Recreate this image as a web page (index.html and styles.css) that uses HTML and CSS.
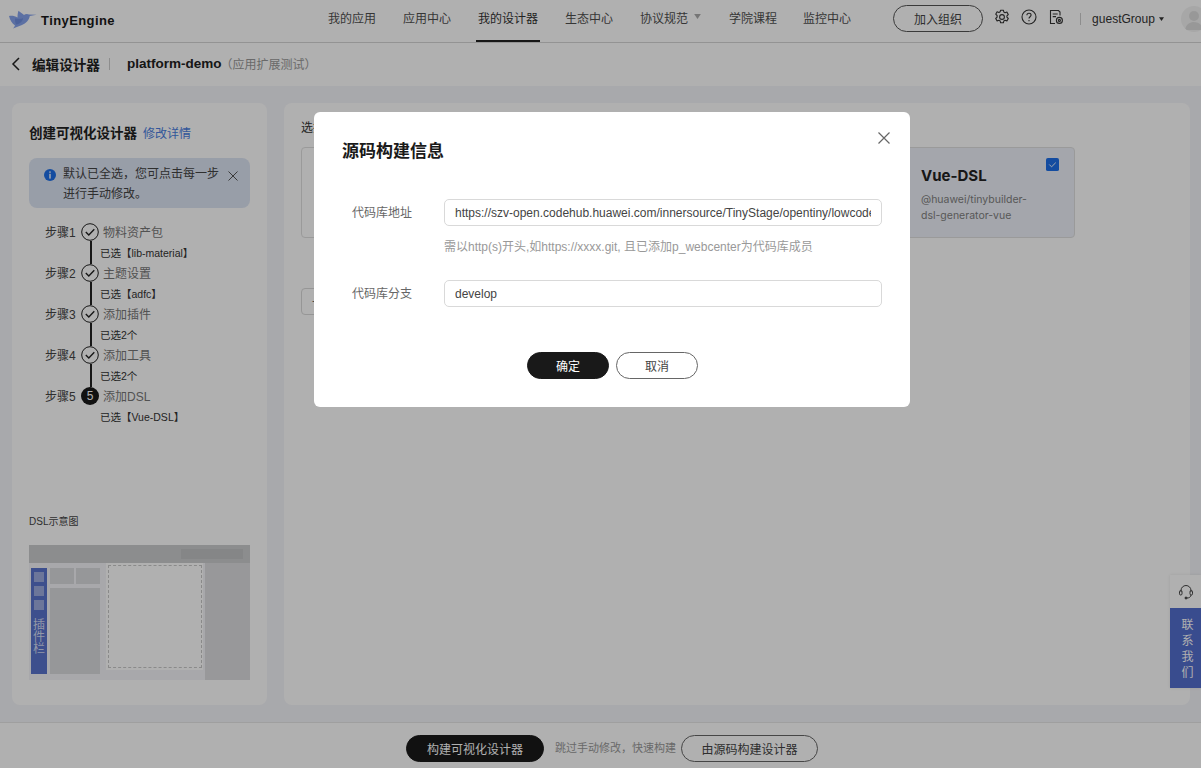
FILE: index.html
```html
<!DOCTYPE html>
<html lang="zh-CN">
<head>
<meta charset="utf-8">
<title>TinyEngine</title>
<link rel="stylesheet" href="styles.css">
</head>
<body>
<div class="page">
  <header class="topbar">
    <div class="brand">
      <svg class="brand-logo" viewBox="0 0 29 20" width="29" height="20"><path fill="#86a3ec" d="M1 6 C4 5.500 7 6 9.500 7.500 C9.500 5 9.800 2.500 10.500 .8 C12 2 14 3.500 16 5 C17.200 3.800 19.500 3.500 21 4.500 L28.500 4.700 L21.800 6 C21 10 18 13.500 14 15 L5 18.500 C6 17.500 6.500 16.500 7 15.500 C4 13.500 2 10 1 6 Z"/><path fill="#6f8fe0" d="M7 8.500 C10 8.500 13 9.500 15 8 C15 11 12 14 8 14.500 C7 12.500 7 10.500 7 8.500 Z"/></svg>
      <span class="brand-name">TinyEngine</span>
    </div>
    <nav class="nav">
      <a class="nav-item">我的应用</a>
      <a class="nav-item">应用中心</a>
      <a class="nav-item nav-active">我的设计器</a>
      <a class="nav-item">生态中心</a>
      <a class="nav-item">协议规范<svg class="caret-grey" viewBox="0 0 8 6" width="7" height="5"><path fill="#aaa" d="M0 0h8L4 6z"/></svg></a>
      <a class="nav-item">学院课程</a>
      <a class="nav-item nav-last">监控中心</a>
    </nav>
    <div class="top-tools">
      <button class="join-btn">加入组织</button>
      <svg class="tool" viewBox="0 0 16 16" width="16" height="16" fill="none" stroke="#333" stroke-width="1.100"><path d="M6.600 1.200h2.800l.4 1.800 1.300.7 1.800-.6 1.400 2.400-1.400 1.300v1.400l1.400 1.300-1.400 2.400-1.800-.6-1.300.7-.4 1.800H6.600l-.4-1.800-1.300-.7-1.800.6-1.400-2.400 1.400-1.300V6.500L1.700 5.200l1.400-2.400 1.800.6 1.300-.7z" stroke-linejoin="round"/><circle cx="8" cy="8" r="2.400"/></svg>
      <svg class="tool" viewBox="0 0 16 16" width="16" height="16" fill="none" stroke="#333" stroke-width="1.100"><circle cx="8" cy="8" r="7"/><path d="M5.900 6.200c0-1.200 1-2 2.100-2s2.100.8 2.100 1.900c0 1.600-2.100 1.700-2.100 3.400"/><path d="M8 11v1.200"/></svg>
      <svg class="tool" viewBox="0 0 16 16" width="16" height="16" fill="none" stroke="#333" stroke-width="1.100"><path d="M7 14.500H2.500v-13h8l1.500 1.500v3.500"/><path d="M4.700 5h5M4.700 7.600h3.300"/><circle cx="11.400" cy="11.400" r="3"/><circle cx="11.400" cy="11.400" r="1"/></svg>
      <span class="tool-divider"></span>
      <span class="user">guestGroup</span>
      <svg class="user-caret" viewBox="0 0 8 6" width="5" height="4"><path fill="#333" d="M0 0h8L4 6z"/></svg>
      <span class="avatar"><svg viewBox="0 0 26 26" width="26" height="26"><circle cx="13" cy="10" r="5" fill="#ddd"/><path d="M4 24c1-6 5-8 9-8s8 2 9 8z" fill="#ddd"/></svg></span>
    </div>
  </header>

  <div class="subbar">
    <svg class="back" viewBox="0 0 9 14" width="9" height="14" fill="none" stroke="#222" stroke-width="1.500"><path d="M8 1 2 7l6 6"/></svg>
    <span class="sub-title">编辑设计器</span>
    <span class="sub-sep"></span>
    <span class="sub-app">platform-demo</span>
    <span class="sub-note">（应用扩展测试）</span>
  </div>

  <main class="content">
    <aside class="side">
      <div class="side-head"><span class="side-title">创建可视化设计器</span><a class="side-link">修改详情</a></div>
      <div class="alert">
        <svg class="alert-icon" viewBox="0 0 12 12" width="12" height="12"><circle cx="6" cy="6" r="6" fill="#1d6fe8"/><rect x="5.300" y="2.400" width="1.400" height="1.400" fill="#fff"/><rect x="5.300" y="4.800" width="1.400" height="4.800" fill="#fff"/></svg>
        <p class="alert-text">默认已全选，您可点击每一步进行手动修改。</p>
        <svg class="alert-close" viewBox="0 0 10 10" width="10" height="10" fill="none" stroke="#555" stroke-width="1"><path d="M.5.5l9 9M9.500.5l-9 9"/></svg>
      </div>
      <ol class="steps">
        <li class="step">
          <span class="step-label">步骤1</span>
          <span class="step-mark"><svg viewBox="0 0 18 18" width="18" height="18" fill="none" stroke="#222"><circle cx="9" cy="9" r="8.300"/><path d="M4.800 9l3 3 5.500-5.700" stroke-width="1.400"/></svg></span>
          <span class="step-name">物料资产包</span>
          <span class="step-sub">已选【lib-material】</span>
        </li>
        <li class="step">
          <span class="step-label">步骤2</span>
          <span class="step-mark"><svg viewBox="0 0 18 18" width="18" height="18" fill="none" stroke="#222"><circle cx="9" cy="9" r="8.300"/><path d="M4.800 9l3 3 5.500-5.700" stroke-width="1.400"/></svg></span>
          <span class="step-name">主题设置</span>
          <span class="step-sub">已选【adfc】</span>
        </li>
        <li class="step">
          <span class="step-label">步骤3</span>
          <span class="step-mark"><svg viewBox="0 0 18 18" width="18" height="18" fill="none" stroke="#222"><circle cx="9" cy="9" r="8.300"/><path d="M4.800 9l3 3 5.500-5.700" stroke-width="1.400"/></svg></span>
          <span class="step-name">添加插件</span>
          <span class="step-sub">已选2个</span>
        </li>
        <li class="step">
          <span class="step-label">步骤4</span>
          <span class="step-mark"><svg viewBox="0 0 18 18" width="18" height="18" fill="none" stroke="#222"><circle cx="9" cy="9" r="8.300"/><path d="M4.800 9l3 3 5.500-5.700" stroke-width="1.400"/></svg></span>
          <span class="step-name">添加工具</span>
          <span class="step-sub">已选2个</span>
        </li>
        <li class="step step-last">
          <span class="step-label">步骤5</span>
          <span class="step-mark step-current">5</span>
          <span class="step-name">添加DSL</span>
          <span class="step-sub">已选【Vue-DSL】</span>
        </li>
      </ol>
      <div class="dsl">
        <div class="dsl-label">DSL示意图</div>
        <div class="dsl-figure">
          <div class="fig-top"><span class="fig-search"></span></div>
          <div class="fig-body">
            <div class="fig-left">
              <div class="fig-plugin">
                <span class="fig-square"></span><span class="fig-square"></span><span class="fig-square"></span>
                <span class="fig-plugin-text">插件栏</span>
              </div>
              <div class="fig-panel">
                <div class="fig-tabs"><span class="fig-tab"></span><span class="fig-tab"></span></div>
                <div class="fig-list"></div>
              </div>
              <div class="fig-canvas"><div class="fig-dash"></div></div>
            </div>
            <div class="fig-right"></div>
          </div>
        </div>
      </div>
    </aside>
    <section class="panel">
      <div class="panel-title">选择DSL</div>
      <div class="cards">
        <div class="card"></div>
        <div class="card"></div>
        <div class="card card-on">
          <svg class="card-check" viewBox="0 0 14 14" width="13" height="13"><rect width="14" height="14" rx="2" fill="#1d6fe8"/><path d="M3.500 7l2.500 2.500 4.500-4.500" fill="none" stroke="#fff" stroke-width="1"/></svg>
          <h3 class="card-name">Vue-DSL</h3>
          <p class="card-desc">@huawei/tinybuilder-dsl-generator-vue</p>
        </div>
      </div>
      <button class="add-box">+</button>
    </section>
  </main>

  <footer class="footer">
    <button class="pill pill-dark build">构建可视化设计器</button>
    <span class="skip">跳过手动修改，快速构建</span>
    <button class="pill pill-line source">由源码构建设计器</button>
  </footer>
</div>

<div class="contact">
  <div class="contact-icon"><svg viewBox="0 0 16 16" width="16" height="16" fill="none" stroke="#444" stroke-width="1"><path d="M3 8V6.500a5 5 0 0 1 10 0V8"/><rect x="1.500" y="6.500" width="2.500" height="4.500" rx="1.200"/><rect x="12" y="6.500" width="2.500" height="4.500" rx="1.200"/><path d="M13 11c0 2-2 3-4 3"/><circle cx="8" cy="14" r="1" fill="#444"/></svg></div>
  <div class="contact-text">联系我们</div>
</div>

<div class="overlay">
  <div class="modal">
    <h2 class="modal-title">源码构建信息</h2>
    <svg class="modal-close" viewBox="0 0 12 12" width="12" height="12" fill="none" stroke="#666" stroke-width="1.200"><path d="M.5.5l11 11M11.500.5l-11 11"/></svg>
    <div class="field">
      <label class="field-label">代码库地址</label>
      <div class="field-main">
        <input class="input" type="text" value="https://szv-open.codehub.huawei.com/innersource/TinyStage/opentiny/lowcode-platform-demo.git">
        <p class="hint">需以http(s)开头,如https://xxxx.git, 且已添加p_webcenter为代码库成员</p>
      </div>
    </div>
    <div class="field">
      <label class="field-label">代码库分支</label>
      <div class="field-main"><input class="input" type="text" value="develop"></div>
    </div>
    <div class="modal-actions">
      <button class="pill pill-dark act">确定</button>
      <button class="pill pill-line act">取消</button>
    </div>
  </div>
</div>
</body>
</html>
```
FILE: styles.css
```css
* { box-sizing: border-box; }
html, body { margin: 0; height: 768px; overflow: hidden; }
body { font-family: "Liberation Sans", "Noto Sans CJK SC", sans-serif; font-size: 12px; color: #333; background: #fff; position: relative; }
p, h2, h3, ol { margin: 0; padding: 0; }
button { font-family: inherit; cursor: pointer; }

.page { display: flex; flex-direction: column; height: 768px; }

.topbar { height: 43px; flex: none; display: flex; align-items: center; background: #fff; border-bottom: 1px solid #d6d6d6; position: relative; }
.brand { display: flex; align-items: center; width: 328px; flex: none; padding-left: 8px; padding-bottom: 2px; }
.brand-logo { flex: none; margin-top: -1px; }
.brand-name { margin-left: 4px; font-size: 13px; font-weight: 700; color: #191919; letter-spacing: .42px; }
.nav { display: flex; height: 42px; gap: 27px; flex: none; }
.nav-item { display: flex; align-items: center; height: 42px; color: #4f4f4f; position: relative; padding-bottom: 8px; }
.nav-active { color: #333; }
.nav-active::after { content: ""; position: absolute; left: -2px; right: -2px; bottom: 0; height: 2px; background: #222; }
.nav-last { margin-left: -1px; }
.caret-grey { margin: -2px 1px 0 6px; }
.top-tools { display: flex; align-items: center; margin-left: 42px; flex: none; height: 42px; padding-bottom: 5px; }
.join-btn { width: 90px; height: 27px; background: #fff; border: 1px solid #555; border-radius: 14px; color: #444; font-size: 12px; padding: 0; margin-right: 11px; }
.tool { margin-right: 11px; flex: none; margin-top: -3px; }
.tool-divider { width: 1px; height: 12px; background: #ccc; margin: 0 12px 0 5px; }
.user { color: #333; margin-left: -1px; }
.user-caret { margin: 1px 0 0 4px; }
.avatar { width: 26px; height: 26px; border-radius: 50%; background: #f2f2f2; margin-left: 17px; flex: none; display: block; overflow: hidden; margin-right: -26px; }

.subbar { height: 43px; flex: none; display: flex; align-items: center; background: #fff; padding-left: 11px; padding-bottom: 2px; }
.back { flex: none; }
.sub-title { margin-left: 12px; width: 68px; font-size: 13.600px; font-weight: 700; color: #222; white-space: nowrap; }
.sub-sep { width: 1px; height: 12px; background: #ccc; margin: 0 17px 0 9px; }
.sub-app { font-size: 13.500px; font-weight: 700; color: #222; }
.sub-note { color: #999; font-size: 12px; margin-left: -1px; }

.content { flex: 1; min-height: 0; display: flex; gap: 17px; background: #f4f5f9; padding: 17px 11px 17px 12px; }
.side { width: 255px; flex: none; background: #fff; border-radius: 8px; padding: 20px 17px 25px; display: flex; flex-direction: column; }
.side-head { display: flex; align-items: center; height: 18px; }
.side-title { font-size: 13.500px; font-weight: 700; color: #222; white-space: nowrap; }
.side-link { margin-left: 6px; color: #4a7de0; }
.alert { width: 221px; height: 50px; margin-top: 17px; border-radius: 8px; background: #dde5f4; display: flex; padding: 6px 13px 0 15px; }
.alert-icon { flex: none; margin-top: 5px; }
.alert-text { width: 156px; margin-left: 7px; line-height: 20px; color: #444; flex: none; }
.alert-close { flex: none; margin: 7px 0 0 9px; }

.steps { list-style: none; margin-top: 15px; }
.step { height: 41px; display: grid; grid-template-columns: 31px 18px auto; grid-template-rows: 18px 23px; column-gap: 5px; align-items: center; position: relative; padding-left: 16px; }
.step::before { content: ""; position: absolute; left: 61px; top: 18px; height: 23px; width: 1.500px; background: #222; }
.step-last::before { display: none; }
.step-label { color: #444; white-space: nowrap; padding-bottom: 2px; }
.step-mark { width: 18px; height: 18px; display: block; }
.step-mark svg { display: block; }
.step-current { border-radius: 50%; background: #191919; color: #fff; text-align: center; line-height: 18px; font-size: 12px; }
.step-name { color: #777; margin-left: -1px; padding-bottom: 2px; }
.step-sub { grid-column: 2 / 4; padding-left: 19px; margin-top: 1px; font-size: 10.500px; color: #333; white-space: nowrap; line-height: 12px; }

.dsl { margin-top: auto; }
.dsl-label { font-size: 10px; color: #444; line-height: 12px; margin-bottom: 17px; }
.dsl-figure { width: 221px; height: 135px; background: #f3f4f8; display: flex; flex-direction: column; }
.fig-top { height: 18px; background: #cbccce; display: flex; align-items: center; justify-content: flex-end; padding-right: 7px; flex: none; }
.fig-search { width: 62px; height: 10px; background: #c1c2c4; }
.fig-body { flex: 1; display: flex; min-height: 0; }
.fig-left { flex: 1; display: flex; padding: 5px 0 6px 2px; min-width: 0; }
.fig-plugin { width: 16px; background: #5973cd; display: flex; flex-direction: column; align-items: center; padding-top: 4px; flex: none; }
.fig-square { width: 10px; height: 10px; background: #9dacdf; margin-bottom: 4px; flex: none; }
.fig-plugin-text { width: 12px; font-size: 12px; line-height: 12px; color: #d4dbf2; margin-top: 5px; }
.fig-panel { width: 50px; margin-left: 3px; display: flex; flex-direction: column; gap: 4px; flex: none; }
.fig-tabs { display: flex; gap: 2px; height: 16px; flex: none; }
.fig-tab { flex: 1; background: #dadbde; }
.fig-list { flex: 1; background: #dadbde; }
.fig-canvas { width: 97px; margin-left: 6px; margin-top: -5px; background: #fff; padding: 2px 1px 1px 2px; flex: none; height: 107px; }
.fig-dash { height: 103px; border: 1px dashed #c9c9c9; }
.fig-right { width: 45px; background: #dcdde0; flex: none; }

.panel { flex: 1; min-width: 0; background: #fff; border-radius: 8px; padding: 17px; }
.panel-title { font-size: 12px; line-height: 16px; color: #333; }
.cards { display: flex; gap: 12px; margin-top: 11px; width: 774px; }
.card { width: 250px; height: 91px; flex: none; border: 1px solid #e0e0e0; border-radius: 4px; background: #fff; position: relative; }
.card-on { background: #eef1f9; padding: 18px 40px 0 95px; }
.card-check { position: absolute; top: 10px; right: 15px; }
.card-name { font-size: 15px; line-height: 20px; font-weight: 700; color: #222; font-family: "Inter", "Liberation Sans", sans-serif; }
.card-desc { font-size: 10.500px; line-height: 16px; margin-top: 6px; color: #808080; font-family: "Inter", "Liberation Sans", sans-serif; }
.add-box { display: block; margin-top: 50px; width: 200px; height: 27px; background: #fff; border: 1px solid #d9d9d9; border-radius: 4px; text-align: left; padding: 0 0 0 10px; color: #666; font-size: 12px; }

.footer { height: 46px; flex: none; background: #fff; border-top: 1px solid #e6e6e6; display: flex; align-items: flex-start; padding: 12px 0 0 406px; }
.pill { height: 27px; border-radius: 14px; font-size: 12px; padding: 0; }
.pill-dark { background: #191919; border: 1px solid #191919; color: #fff; }
.pill-line { background: #fff; border: 1px solid #666; color: #444; }
.build { width: 138px; }
.skip { margin-left: 11px; font-size: 11px; color: #999; width: 126px; line-height: 27px; white-space: nowrap; }
.source { width: 137px; }

.contact { position: absolute; top: 575px; left: 1170px; width: 31px; box-shadow: 0 0 3px rgba(0,0,0,.1); }
.contact-icon { height: 33px; background: #fff; display: flex; align-items: center; justify-content: center; }
.contact-text { height: 80px; background: #536ece; color: #fff; font-size: 12px; line-height: 16px; width: 31px; padding: 9px 7px 0 11px; text-align: center; }

.overlay { position: absolute; inset: 0; background: rgba(0,0,0,.31); padding: 112px 0 0 314px; }
.modal { width: 596px; height: 295px; background: #fff; border-radius: 6px; padding: 28px 28px 0; position: relative; }
.modal-title { font-size: 17px; line-height: 22px; font-weight: 700; color: #1a1a1a; padding-top: 1px; height: 22px; }
.modal-close { position: absolute; top: 20px; right: 20px; }
.field { display: flex; margin-top: 37px; padding-left: 10px; }
.field + .field { margin-top: 25px; }
.field-label { width: 92px; flex: none; line-height: 28px; color: #666; }
.field-main { width: 438px; flex: none; }
.input { display: block; width: 100%; height: 27px; border: 1px solid #d9d9d9; border-radius: 5px; padding: 0 10px; font-family: inherit; font-size: 12px; color: #444; outline: none; }
.hint { margin-top: 13px; line-height: 16px; color: #999; white-space: nowrap; }
.modal-actions { display: flex; justify-content: flex-start; gap: 7px; margin-top: 44px; padding-left: 185px; }
.act { width: 82px; }
```
